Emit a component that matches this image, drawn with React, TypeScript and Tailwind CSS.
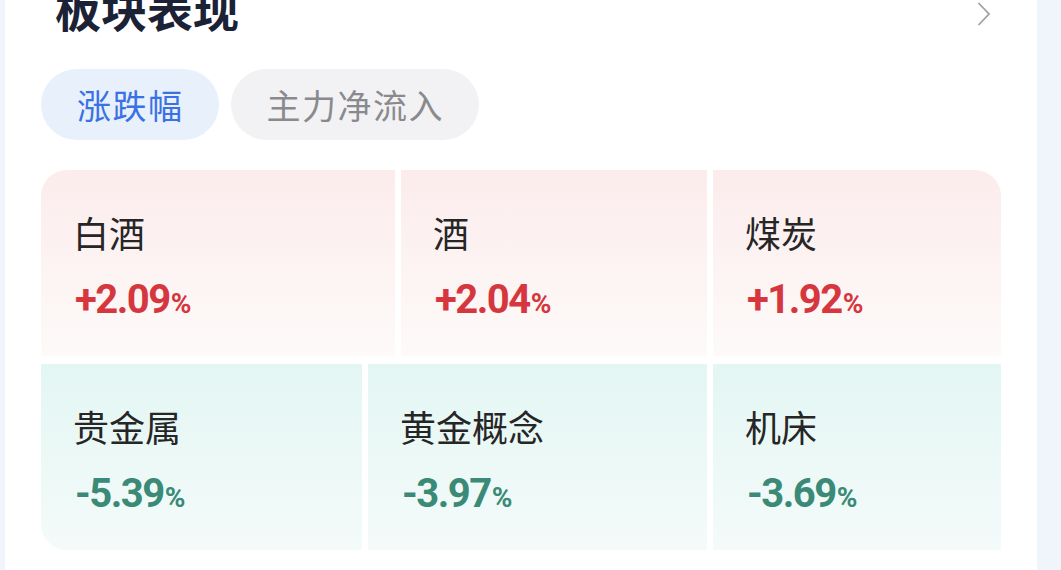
type Sector = {
  name: string
  change: number
  width: string
  corner: string
}

const topRow: Sector[] = [
  { name: '白酒', change: 2.09, width: 'w-[354px]', corner: 'rounded-tl-[26px]' },
  { name: '酒', change: 2.04, width: 'w-[306px]', corner: '' },
  { name: '煤炭', change: 1.92, width: 'w-[288px]', corner: 'rounded-tr-[26px]' },
]

const bottomRow: Sector[] = [
  { name: '贵金属', change: -5.39, width: 'w-[321px]', corner: 'rounded-bl-[26px]' },
  { name: '黄金概念', change: -3.97, width: 'w-[339px]', corner: '' },
  { name: '机床', change: -3.69, width: 'w-[288px]', corner: '' },
]

const cjk = "font-['Noto_Sans_CJK_SC','Noto_Sans',sans-serif]"

function SectorCell({ sector }: { sector: Sector }) {
  const up = sector.change >= 0
  return (
    <div
      className={`${sector.width} ${sector.corner} h-[186px] shrink-0 pl-[34px] pt-[41px] ${
        up
          ? 'bg-gradient-to-b from-[#fcecec] to-[#fdfaf9]'
          : 'bg-gradient-to-b from-[#e3f6f3] to-[#f4fbfa]'
      }`}
    >
      <div className={`${cjk} -ml-[2px] text-[36px] leading-[42px] text-[#262626]`}>
        {sector.name}
      </div>
      <div
        className={`mt-[27px] flex items-baseline font-['Roboto',sans-serif] font-bold leading-none ${
          up ? 'text-[#d6373e]' : 'text-[#3a8a77]'
        }`}
      >
        <span className="text-[40px] tracking-[-1.5px]">
          {up ? '+' : ''}
          {sector.change.toFixed(2)}
        </span>
        <span className="ml-[1px] text-[28px]">%</span>
      </div>
    </div>
  )
}

export default function App() {
  return (
    <div className="flex h-[570px] w-full overflow-hidden bg-[#f0f4fb]">
      <div className="ml-[5px] h-full w-[1032px] bg-white">
        <div className="-mt-[16px] flex items-start justify-between pl-[50px] pr-[46px]">
          <h2 className={`${cjk} text-[46px] font-bold leading-none text-[#1b2236]`}>板块表现</h2>
          <svg
            width="14"
            height="24"
            viewBox="0 0 14 24"
            fill="none"
            className="mt-[18px]"
          >
            <path d="M1.5 1 L12 12 L1.5 23" stroke="#a0a0a0" strokeWidth="1.8" />
          </svg>
        </div>

        <div className="mt-[39px] flex gap-[12px] pl-[36px]">
          <button
            className={`${cjk} h-[71px] rounded-full bg-[#e8f0fc] pl-[36px] pr-[35px] text-[34px] tracking-[1.5px] text-[#3a72e4]`}
          >
            涨跌幅
          </button>
          <button
            className={`${cjk} h-[71px] rounded-full bg-[#f2f2f4] pl-[36px] pr-[35px] text-[34px] tracking-[1.5px] text-[#8a8a8e]`}
          >
            主力净流入
          </button>
        </div>

        <div className="mt-[30px] ml-[36px] flex w-[960px] flex-col gap-[8px]">
          <div className="flex gap-[6px]">
            {topRow.map((s) => (
              <SectorCell key={s.name} sector={s} />
            ))}
          </div>
          <div className="flex gap-[6px]">
            {bottomRow.map((s) => (
              <SectorCell key={s.name} sector={s} />
            ))}
          </div>
        </div>
      </div>
    </div>
  )
}
